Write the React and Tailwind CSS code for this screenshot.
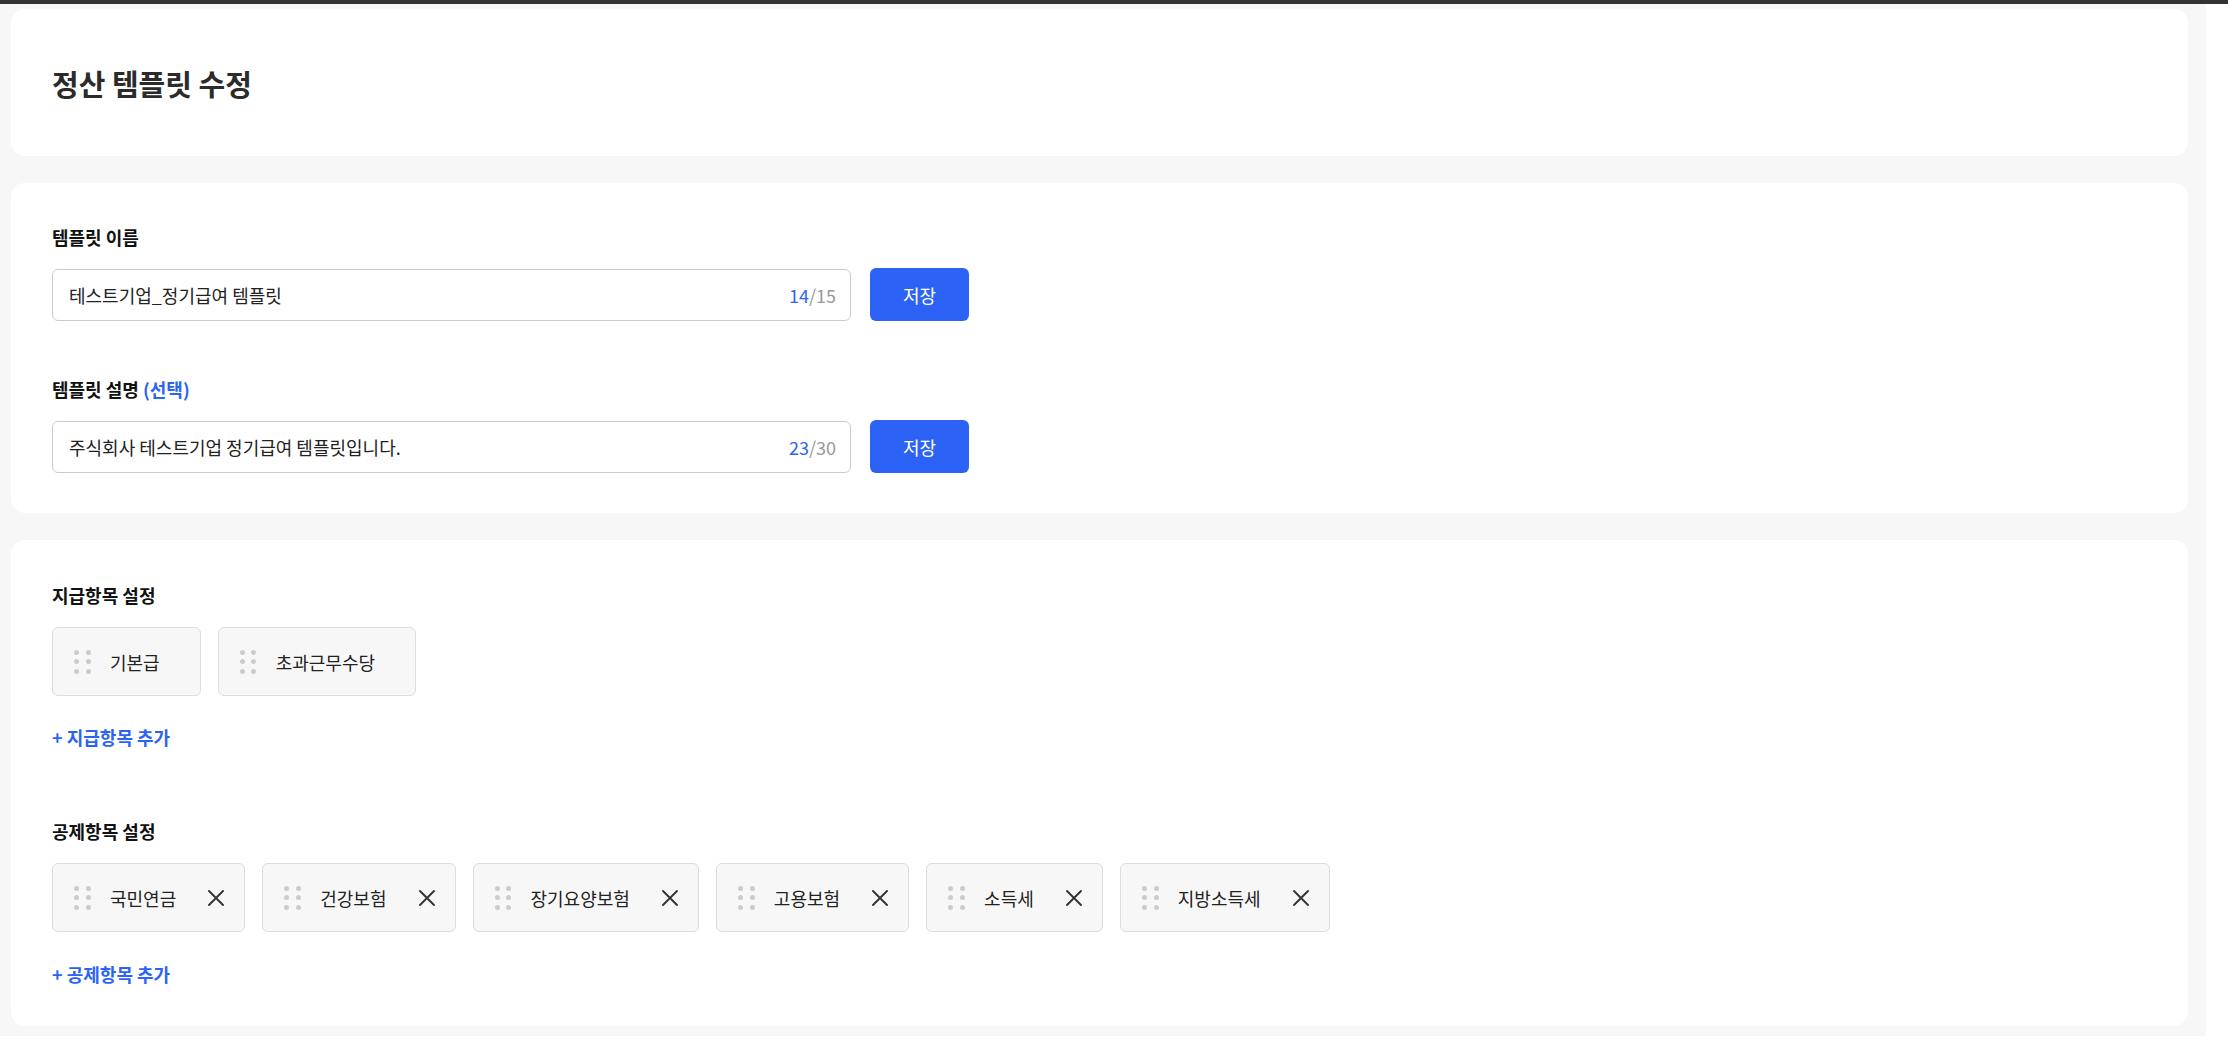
import React from 'react';

const FONT = { fontFamily: '"Noto Sans CJK KR", "Noto Sans", sans-serif' };

const payItems = ['기본급', '초과근무수당'];
const deductItems = ['국민연금', '건강보험', '장기요양보험', '고용보험', '소득세', '지방소득세'];

function DragDots() {
  return (
    <div className="grid grid-cols-2 gap-x-[6.5px] gap-y-[4.5px] w-[17px] shrink-0">
      {[0, 1, 2, 3, 4, 5].map(i => (
        <span key={i} className="block w-[5px] h-[5px] rounded-full bg-[#cccccc]" />
      ))}
    </div>
  );
}

function CloseIcon() {
  return (
    <svg width="16" height="16" viewBox="0 0 16 16" className="shrink-0">
      <path d="M1 1 L15 15 M15 1 L1 15" stroke="#333333" strokeWidth="1.9" strokeLinecap="round" />
    </svg>
  );
}

function Chip({ label, removable }) {
  return (
    <div
      className={`flex items-center h-[69px] pl-[21px] ${removable ? 'pr-[20px]' : 'pr-[40px]'} bg-[#f7f7f7] border border-[#dddddd] rounded-[6px]`}
    >
      <DragDots />
      <span className="ml-[19px] text-[18px] leading-[26px] text-[#222222] whitespace-nowrap">{label}</span>
      {removable && <span className="ml-[32px] flex"><CloseIcon /></span>}
    </div>
  );
}

function TextRow({ value, count, max }) {
  return (
    <div className="flex items-center mt-[18px]">
      <div className="flex items-center justify-between w-[799px] h-[52px] pl-[16px] pr-[14px] border border-[#cccccc] rounded-[6px] bg-white">
        <span className="text-[18px] leading-[26px] text-[#222222]">{value}</span>
        <span className="text-[18px] leading-[26px]">
          <span className="text-[#2b64f5]">{count}</span>
          <span className="text-[#999999]">/{max}</span>
        </span>
      </div>
      <button className="ml-[19px] w-[99px] h-[53px] rounded-[6px] bg-[#2c63f6] text-white text-[18px] leading-[26px]">
        저장
      </button>
    </div>
  );
}

export default function App() {
  return (
    <div className="w-[2228px] h-[1054px] bg-white overflow-hidden" style={FONT}>
      <div className="h-[4px] bg-[#333333]" />
      <div className="w-[2206px] h-[1032px] bg-[#f7f7f7] pl-[11px] pr-[18px] pt-[5px] flex flex-col gap-[27px]">
        {/* Title */}
        <div className="bg-white rounded-[14px] h-[147px] flex items-center px-[41px]">
          <h1 className="text-[29px] leading-[40px] font-bold text-[#2b2b2b]">정산 템플릿 수정</h1>
        </div>

        {/* Name & description */}
        <div className="bg-white rounded-[14px] px-[41px] pt-[41px] pb-[40px]">
          <p className="text-[18px] leading-[26px] font-bold text-[#111111]">템플릿 이름</p>
          <TextRow value="테스트기업_정기급여 템플릿" count="14" max="15" />
          <p className="mt-[55px] text-[18px] leading-[26px] font-bold text-[#111111]">
            템플릿 설명 <span className="text-[#2b64f5]">(선택)</span>
          </p>
          <TextRow value="주식회사 테스트기업 정기급여 템플릿입니다." count="23" max="30" />
        </div>

        {/* Items */}
        <div className="bg-white rounded-[14px] px-[41px] pt-[42px] pb-[39px]">
          <p className="text-[18px] leading-[26px] font-bold text-[#111111]">지급항목 설정</p>
          <div className="flex gap-[17px] mt-[19px]">
            {payItems.map(item => <Chip key={item} label={item} />)}
          </div>
          <button className="mt-[28px] block text-[18px] leading-[26px] font-bold text-[#2b64f5]">+ 지급항목 추가</button>

          <p className="mt-[68px] text-[18px] leading-[26px] font-bold text-[#111111]">공제항목 설정</p>
          <div className="flex gap-[17px] mt-[19px]">
            {deductItems.map(item => <Chip key={item} label={item} removable />)}
          </div>
          <button className="mt-[29px] block text-[18px] leading-[26px] font-bold text-[#2b64f5]">+ 공제항목 추가</button>
        </div>
      </div>
    </div>
  );
}
